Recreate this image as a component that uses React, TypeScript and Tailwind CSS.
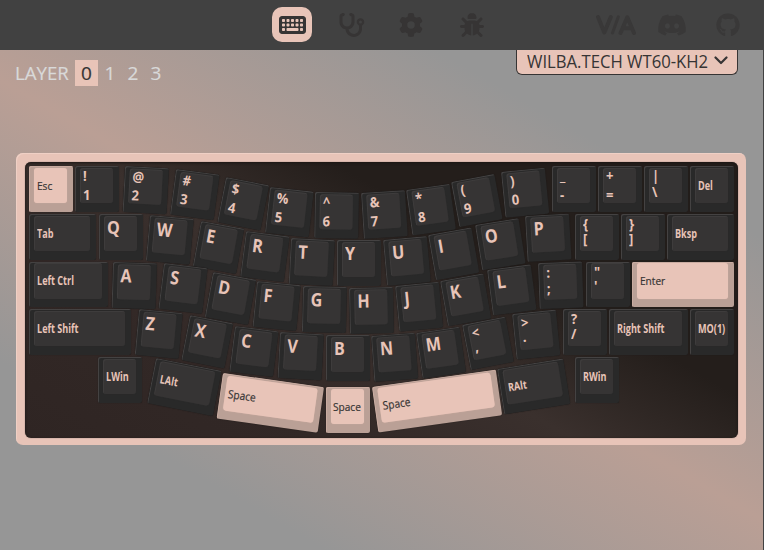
import type { CSSProperties } from "react";
import { FaBug, FaDiscord, FaGear, FaGithub, FaKeyboard, FaStethoscope } from "react-icons/fa6";

type KeySpec = {
  x: number;
  y: number;
  r?: number;
  w?: number;
  label?: string;
  letter?: string;
  pair?: [string, string];
  /** distance of the lower legend's centre from the key's top edge */
  low?: number;
  accent?: boolean;
};

const KEYS: KeySpec[] = [
  { x: 29.3, y: 166, label: "Esc", accent: true },
  { x: 75, y: 166, pair: ["!", "1"] },
  { x: 125, y: 166, r: 3, pair: ["@", "2"] },
  { x: 176.3, y: 169.3, r: 7.5, pair: ["#", "3"] },
  { x: 226, y: 177.3, r: 11, pair: ["$", "4"] },
  { x: 270.3, y: 186.7, r: 6.3, pair: ["%", "5"] },
  { x: 314.7, y: 192, r: 1, pair: ["^", "6"] },
  { x: 360.5, y: 193.3, r: -3.6, pair: ["&", "7"] },
  { x: 406.3, y: 190.3, r: -8, pair: ["*", "8"] },
  { x: 451.3, y: 181.7, r: -10.5, pair: ["(", "9"] },
  { x: 501, y: 172, r: -5.6, pair: [")", "0"] },
  { x: 552.3, y: 166, pair: ["_", "-"] },
  { x: 598, y: 166, pair: ["+", "="] },
  { x: 644, y: 166, pair: ["|", "\\"], low: 27 },
  { x: 690, y: 166, label: "Del" },

  { x: 29.3, y: 214, w: 67, label: "Tab" },
  { x: 98.7, y: 214, letter: "Q" },
  { x: 150, y: 215, r: 5.2, letter: "W" },
  { x: 201, y: 221, r: 10.3, letter: "E" },
  { x: 246, y: 231, r: 7.3, letter: "R" },
  { x: 291.3, y: 238, r: 2.9, letter: "T" },
  { x: 337, y: 240.2, letter: "Y" },
  { x: 383.3, y: 239.7, r: -5, letter: "U" },
  { x: 428.3, y: 235, r: -10, letter: "I" },
  { x: 474.7, y: 225, r: -9, letter: "O" },
  { x: 525.3, y: 216.3, r: -3.2, letter: "P" },
  { x: 575.2, y: 214, pair: ["{", "["], low: 26 },
  { x: 621, y: 214, pair: ["}", "]"], low: 26 },
  { x: 667, y: 214, w: 67, label: "Bksp" },

  { x: 29.3, y: 261.7, w: 78.5, label: "Left Ctrl" },
  { x: 112.5, y: 261.5, r: 1.8, letter: "A" },
  { x: 164.3, y: 263.3, r: 7, letter: "S" },
  { x: 212.7, y: 272, r: 10.3, letter: "D" },
  { x: 256.7, y: 281.3, r: 5.6, letter: "F" },
  { x: 303.3, y: 286.2, r: 1.4, letter: "G" },
  { x: 348.7, y: 287.8, r: -1.2, letter: "H" },
  { x: 395, y: 286.3, r: -5.5, letter: "J" },
  { x: 440, y: 281, r: -10, letter: "K" },
  { x: 487.3, y: 270.3, r: -7.5, letter: "L" },
  { x: 538.3, y: 263.3, r: -2, pair: [":", ";"], low: 27 },
  { x: 586, y: 261.7, pair: ['"', "'"], low: 25 },
  { x: 632, y: 261.7, w: 102, label: "Enter", accent: true },

  { x: 29.3, y: 309.2, w: 101.5, label: "Left Shift" },
  { x: 139.3, y: 309, r: 5.3, letter: "Z" },
  { x: 190.3, y: 315, r: 11, letter: "X" },
  { x: 235, y: 325.5, r: 7.1, letter: "C" },
  { x: 280, y: 332, r: 3.1, letter: "V" },
  { x: 325.6, y: 335.2, letter: "B" },
  { x: 371, y: 335.8, r: -4.2, letter: "N" },
  { x: 416, y: 332.5, r: -8.2, letter: "M" },
  { x: 462.3, y: 325, r: -11, pair: ["<", ","], low: 25 },
  { x: 512, y: 314.3, r: -5.8, pair: [">", "."], low: 25 },
  { x: 563.2, y: 309.2, pair: ["?", "/"], low: 26 },
  { x: 609, y: 309.2, w: 79, label: "Right Shift" },
  { x: 690, y: 309.2, label: "MO(1)" },

  { x: 98, y: 357, label: "LWin" },
  { x: 156, y: 357.8, r: 11.1, w: 67, label: "LAlt" },
  { x: 223.3, y: 372.8, r: 8, w: 102, label: "Space", accent: true },
  { x: 325.6, y: 387.2, label: "Space", accent: true },
  { x: 372, y: 387.2, r: -8, w: 125, label: "Space", accent: true },
  { x: 496.7, y: 369, r: -9, w: 67, label: "RAlt" },
  { x: 575.2, y: 357, label: "RWin" },
];

// The plate's top-left corner, which key positions are measured from
const PLATE = { x: 25, y: 162 };

function Key({ x, y, r = 0, w = 44, label, letter, pair, low = 30, accent }: KeySpec) {
  const style: CSSProperties = {
    left: x - PLATE.x,
    top: y - PLATE.y,
    width: w,
    transform: r ? `rotate(${r}deg)` : undefined,
  };
  return (
    <div
      style={style}
      className={
        "absolute h-[45.5px] origin-top-left rounded-[2px] pl-[5px] pr-[6px] pt-[1.5px] " +
        (accent
          ? "bg-[#baa096] shadow-[inset_1px_1px_0_#c9aba0,0_0_1px_#1b1716]"
          : "bg-[#292929] shadow-[inset_1px_1px_0_#444242,0_0_1px_#1b1716]")
      }
    >
      <div
        className={
          "h-[35.5px] rounded-[3px] " +
          (accent
            ? "bg-[#e8c4b8] shadow-[0_0_1px_#d8b5aa]"
            : "bg-[#363434] shadow-[inset_1px_1px_0_#3e3c3c,0_0_1px_#323131]")
        }
      />
      {label && (
        <span
          className={
            "absolute left-[7.5px] top-[11.5px] origin-left whitespace-nowrap text-[11.5px] leading-4 " +
            (accent
              ? "scale-x-[0.88] text-[#363434] [-webkit-text-stroke:0.2px_#363434]"
              : "scale-x-[0.79] font-bold text-[#e8c4b8]")
          }
        >
          {label}
        </span>
      )}
      {letter && (
        <span className="absolute left-[8px] top-[2.5px] origin-left scale-x-[0.87] text-[18.5px] font-bold leading-5 text-[#e8c4b8]">
          {letter}
        </span>
      )}
      {pair && (
        <>
          <span className="absolute left-[8px] top-[2px] origin-left scale-x-[0.93] text-[14px] font-bold leading-4 text-[#e8c4b8]">
            {pair[0]}
          </span>
          <span
            style={{ top: low - 9 }}
            className="absolute left-[8px] origin-left scale-x-[0.93] text-[14px] font-bold leading-4 text-[#e8c4b8]"
          >
            {pair[1]}
          </span>
        </>
      )}
    </div>
  );
}

function ViaLogo() {
  return (
    <svg viewBox="0 0 40 20" className="h-5 w-10" fill="none" stroke="currentColor" strokeLinecap="round" strokeLinejoin="round">
      <path d="M2 2 L8.3 17.5 L14.8 2" strokeWidth="4" />
      <path d="M22.3 1.8 L16.5 18" strokeWidth="3" />
      <path d="M24.5 18 L31.3 2.3 L38 18 M28 13.3 H35" strokeWidth="4" />
    </svg>
  );
}

function Header() {
  return (
    <header className="relative flex h-[50px] items-center justify-center bg-[#414141] text-[#363434]">
      <nav className="flex items-center gap-5">
        <button className="-mt-px flex h-[35px] w-10 items-center justify-center rounded-[10px] bg-[#e8c4b8]">
          <FaKeyboard className="mt-px h-6 w-[27px]" />
        </button>
        <button className="flex w-10 justify-center">
          <FaStethoscope className="mr-px h-6 w-[27px]" />
        </button>
        <button className="flex w-10 justify-center">
          <FaGear className="mr-[2px] h-6 w-6" />
        </button>
        <button className="flex w-10 justify-center">
          <FaBug className="h-6 w-6" />
        </button>
      </nav>
      <div className="absolute right-[24px] top-0 flex h-[50px] items-center text-[#393838]">
        <ViaLogo />
        <FaDiscord className="ml-[21px] h-6 w-[30px]" />
        <FaGithub className="ml-[29px] h-6 w-6" />
      </div>
    </header>
  );
}

function Toolbar() {
  return (
    <div className="flex h-[103px] items-start justify-between pl-[15px] pr-[25px]">
      <div className="flex items-center pt-[10px] text-[19px] leading-[26px] text-[#d9d9d9] [-webkit-text-stroke:0.2px_currentColor]">
        <span className="w-[60px] whitespace-nowrap">
          <span className="inline-block origin-left scale-x-[0.98]">LAYER</span>
        </span>
        <span className="w-[23px] bg-[#e8c4b8] text-center text-[#363434]">0</span>
        <span className="w-[23px] pl-px text-center">1</span>
        <span className="w-[23px] pl-px text-center">2</span>
        <span className="w-[23px] pl-px text-center">3</span>
      </div>
      <button className="flex h-[25px] w-[222px] items-center rounded-b-[6px] border border-t-0 border-[#363434] bg-[#e8c4b8] pl-[10px] text-[17.5px] text-[#363434]">
        <span className="-mt-[2px] w-[187px] text-left">
          <span className="inline-block origin-left scale-x-[0.953] whitespace-nowrap leading-6">WILBA.TECH WT60-KH2</span>
        </span>
        <svg viewBox="0 0 14 9" className="mb-[3px] h-[9px] w-[14px]" fill="none" stroke="currentColor" strokeWidth="2.2" strokeLinecap="round" strokeLinejoin="round">
          <path d="M1.5 1.5 L7 7 L12.5 1.5" />
        </svg>
      </button>
    </div>
  );
}

export default function App() {
  return (
    <div className="flex h-[550px] w-[764px] flex-col overflow-hidden font-['Open_Sans','Noto_Sans',sans-serif]">
      <Header />
      <main className="h-[500px] border-r border-[#424242] bg-[linear-gradient(30deg,#969696_20%,#ba9f95_50%,#969696_80%)]">
        <Toolbar />
        <div className="ml-4 h-[292px] w-[730px] rounded-[7px] bg-[#e8c4b8] p-[9px] pr-2 pb-[7.5px] shadow-[inset_1px_1px_0_#efd0c5]">
          <div className="relative h-full rounded-[6px] bg-[linear-gradient(30deg,#2f2523_0%,#322826_25%,#3a302d_46%,#241e1b_66%)] shadow-[inset_0_1px_3px_#1c1614,0_0_1px_#4a403d]">
            {KEYS.map((key, i) => (
              <Key key={i} {...key} />
            ))}
          </div>
        </div>
      </main>
    </div>
  );
}
